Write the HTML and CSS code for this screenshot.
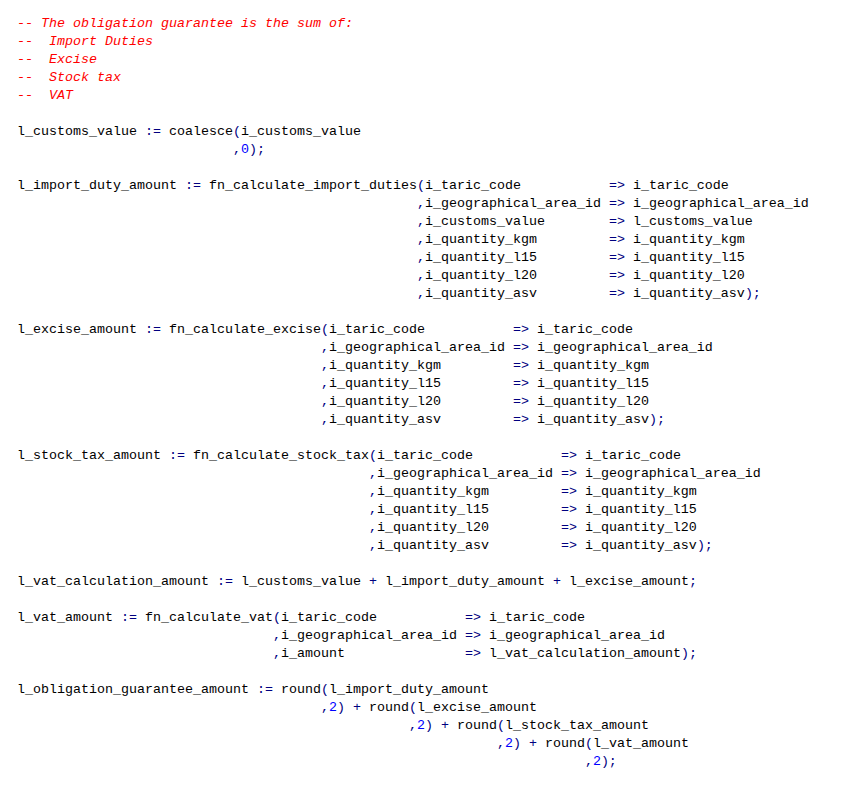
FILE: index.html
```html
<!DOCTYPE html>
<html>
<head>
<meta charset="utf-8">
<link rel="stylesheet" href="styles.css">
</head>
<body>
<pre class="code"><span class="c">-- The obligation guarantee is the sum of:</span>
<span class="c">--  Import Duties</span>
<span class="c">--  Excise</span>
<span class="c">--  Stock tax</span>
<span class="c">--  VAT</span>

l_customs_value <span class="p">:=</span> coalesce<span class="p">(</span>i_customs_value
                           <span class="p">,</span><span class="n">0</span><span class="p">);</span>

l_import_duty_amount <span class="p">:=</span> fn_calculate_import_duties<span class="p">(</span>i_taric_code           <span class="p">=&gt;</span> i_taric_code
                                                  <span class="p">,</span>i_geographical_area_id <span class="p">=&gt;</span> i_geographical_area_id
                                                  <span class="p">,</span>i_customs_value        <span class="p">=&gt;</span> l_customs_value
                                                  <span class="p">,</span>i_quantity_kgm         <span class="p">=&gt;</span> i_quantity_kgm
                                                  <span class="p">,</span>i_quantity_l15         <span class="p">=&gt;</span> i_quantity_l15
                                                  <span class="p">,</span>i_quantity_l20         <span class="p">=&gt;</span> i_quantity_l20
                                                  <span class="p">,</span>i_quantity_asv         <span class="p">=&gt;</span> i_quantity_asv<span class="p">);</span>

l_excise_amount <span class="p">:=</span> fn_calculate_excise<span class="p">(</span>i_taric_code           <span class="p">=&gt;</span> i_taric_code
                                      <span class="p">,</span>i_geographical_area_id <span class="p">=&gt;</span> i_geographical_area_id
                                      <span class="p">,</span>i_quantity_kgm         <span class="p">=&gt;</span> i_quantity_kgm
                                      <span class="p">,</span>i_quantity_l15         <span class="p">=&gt;</span> i_quantity_l15
                                      <span class="p">,</span>i_quantity_l20         <span class="p">=&gt;</span> i_quantity_l20
                                      <span class="p">,</span>i_quantity_asv         <span class="p">=&gt;</span> i_quantity_asv<span class="p">);</span>

l_stock_tax_amount <span class="p">:=</span> fn_calculate_stock_tax<span class="p">(</span>i_taric_code           <span class="p">=&gt;</span> i_taric_code
                                            <span class="p">,</span>i_geographical_area_id <span class="p">=&gt;</span> i_geographical_area_id
                                            <span class="p">,</span>i_quantity_kgm         <span class="p">=&gt;</span> i_quantity_kgm
                                            <span class="p">,</span>i_quantity_l15         <span class="p">=&gt;</span> i_quantity_l15
                                            <span class="p">,</span>i_quantity_l20         <span class="p">=&gt;</span> i_quantity_l20
                                            <span class="p">,</span>i_quantity_asv         <span class="p">=&gt;</span> i_quantity_asv<span class="p">);</span>

l_vat_calculation_amount <span class="p">:=</span> l_customs_value <span class="p">+</span> l_import_duty_amount <span class="p">+</span> l_excise_amount<span class="p">;</span>

l_vat_amount <span class="p">:=</span> fn_calculate_vat<span class="p">(</span>i_taric_code           <span class="p">=&gt;</span> i_taric_code
                                <span class="p">,</span>i_geographical_area_id <span class="p">=&gt;</span> i_geographical_area_id
                                <span class="p">,</span>i_amount               <span class="p">=&gt;</span> l_vat_calculation_amount<span class="p">);</span>

l_obligation_guarantee_amount <span class="p">:=</span> round<span class="p">(</span>l_import_duty_amount
                                      <span class="p">,</span><span class="n">2</span><span class="p">)</span> <span class="p">+</span> round<span class="p">(</span>l_excise_amount
                                                 <span class="p">,</span><span class="n">2</span><span class="p">)</span> <span class="p">+</span> round<span class="p">(</span>l_stock_tax_amount
                                                            <span class="p">,</span><span class="n">2</span><span class="p">)</span> <span class="p">+</span> round<span class="p">(</span>l_vat_amount
                                                                       <span class="p">,</span><span class="n">2</span><span class="p">);</span></pre>
</body>
</html>
```

FILE: styles.css
```css
html, body {
  margin: 0;
  padding: 0;
  background: #ffffff;
}

.code {
  margin: 0;
  padding: 15px 0 0 17px;
  font-family: "Liberation Mono", "Courier New", monospace;
  font-size: 13.333px;
  line-height: 18px;
  color: #000000;
}

.c {
  color: #ff0000;
  font-style: italic;
}

.p {
  color: #000080;
}

.n {
  color: #0000ff;
}
```
